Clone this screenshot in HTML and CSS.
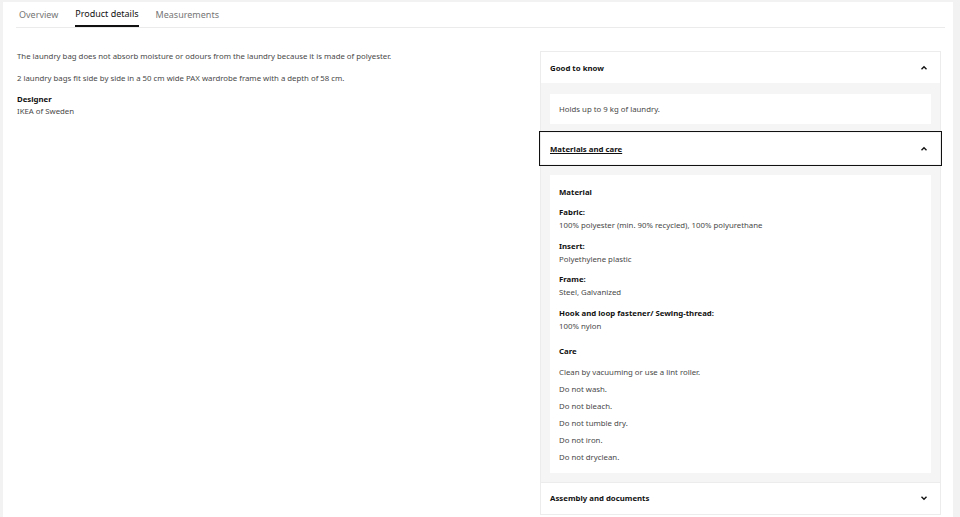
FILE: index.html
```html
<!DOCTYPE html>
<html>
<head>
  <title>Product details</title>
  <link rel="stylesheet" href="styles.css">
</head>
<body>
  <div class="page">
    <div class="tabs">
      <span class="tab">Overview</span>
      <span class="tab active">Product details</span>
      <span class="tab">Measurements</span>
    </div>

    <div class="content">
      <div class="details">
        <p>The laundry bag does not absorb moisture or odours from the laundry because it is made of polyester.</p>
        <p>2 laundry bags fit side by side in a 50 cm wide PAX wardrobe frame with a depth of 58 cm.</p>
        <div class="designer">
          <b>Designer</b>
          <span>IKEA of Sweden</span>
        </div>
      </div>

      <div class="accordion">
        <div class="acc-head">
          <span>Good to know</span>
          <svg class="chev" viewBox="0 0 8 8"><path d="M1.5 5.2 L4 2.8 L6.5 5.2" /></svg>
        </div>
        <div class="acc-body">
          <div class="card short">Holds up to 9 kg of laundry.</div>
        </div>

        <div class="acc-head focused">
          <span class="underline">Materials and care</span>
          <svg class="chev" viewBox="0 0 8 8"><path d="M1.5 5.2 L4 2.8 L6.5 5.2" /></svg>
        </div>
        <div class="acc-body">
          <div class="card">
            <h4>Material</h4>
            <div class="pair"><b>Fabric:</b><span>100% polyester (min. 90% recycled), 100% polyurethane</span></div>
            <div class="pair"><b>Insert:</b><span>Polyethylene plastic</span></div>
            <div class="pair"><b>Frame:</b><span>Steel, Galvanized</span></div>
            <div class="pair"><b>Hook and loop fastener/ Sewing-thread:</b><span>100% nylon</span></div>
            <h4 class="care">Care</h4>
            <ul>
              <li>Clean by vacuuming or use a lint roller.</li>
              <li>Do not wash.</li>
              <li>Do not bleach.</li>
              <li>Do not tumble dry.</li>
              <li>Do not iron.</li>
              <li>Do not dryclean.</li>
            </ul>
          </div>
        </div>

        <div class="acc-head last">
          <span>Assembly and documents</span>
          <svg class="chev" viewBox="0 0 8 8"><path d="M1.5 2.8 L4 5.2 L6.5 2.8" /></svg>
        </div>
      </div>
    </div>
  </div>
</body>
</html>
```

FILE: styles.css
```css
body {
  margin: 0;
  background-color: #f2f2f2;
  font-family: "Noto Sans", "Open Sans", sans-serif;
  color: #484848;
}

.page {
  margin: 2px 7px 0 3px;
  height: 515px;
  background-color: white;
  overflow: hidden;
}

.tabs {
  display: flex;
  gap: 17px;
  margin: 0 8px 0 13px;
  padding-left: 3px;
  border-bottom: 1px solid #ebebeb;
  height: 25px;
}

.tab {
  font-size: 9px;
  line-height: 25px;
  color: #767676;
}

.tab.active {
  color: #111;
  border-bottom: 2px solid #111;
  line-height: 23px;
}

.content {
  display: grid;
  grid-template-columns: 1fr 401px;
  align-items: start;
  gap: 30px;
  padding: 22px 12px 0 14px;
}

.details {
  font-size: 7.8px;
  line-height: 12px;
}

.details p {
  margin: 0 0 10px 0;
}

.designer {
  display: flex;
  flex-direction: column;
  margin-top: -1px;
}

.designer b {
  color: #111;
}

.accordion {
  margin-top: 1px;
  background-color: #f5f5f5;
  border: 1px solid #ececec;
  font-size: 7.8px;
}

.acc-head {
  display: flex;
  justify-content: space-between;
  align-items: center;
  height: 31px;
  padding: 0 12px 0 9px;
  background-color: white;
  font-weight: bold;
  color: #111;
}

.acc-head.focused {
  outline: 1px solid #111;
  outline-offset: 1px;
}

.acc-head.last {
  border-top: 1px solid #ececec;
}

.underline {
  text-decoration: underline;
}

.chev {
  width: 8px;
  height: 8px;
  fill: none;
  stroke: #111;
  stroke-width: 1.4;
}

.acc-body {
  padding: 11px 9px 9px 9px;
}

.card {
  background-color: white;
  padding: 11px 9px 9px 9px;
  line-height: 13px;
}

.card.short {
  padding: 9px 9px 8px 9px;
}

.card h4 {
  margin: 0 0 7px 0;
  font-size: 7.8px;
  color: #111;
}

.card .care {
  margin-top: 12px;
  margin-bottom: 8px;
}

.pair {
  display: flex;
  flex-direction: column;
  margin-bottom: 7.5px;
}

.pair b {
  color: #111;
}

.card ul {
  list-style: none;
  margin: 0;
  padding: 0;
}

.card li {
  margin-bottom: 4px;
}

.card li:last-child {
  margin-bottom: 0;
}
```
